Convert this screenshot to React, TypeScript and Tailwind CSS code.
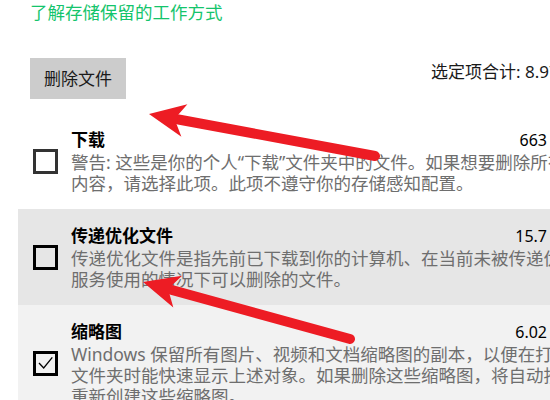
type Pt = [number, number];

// red callout arrow drawn over the screenshot
function Arrow({ tail, tip }: { tail: Pt; tip: Pt }) {
  const dx = tip[0] - tail[0];
  const dy = tip[1] - tail[1];
  const len = Math.hypot(dx, dy);
  const ux = dx / len;
  const uy = dy / len;
  const px = -uy;
  const py = ux;
  const at = (back: number, side: number) =>
    `${tip[0] - ux * back + px * side},${tip[1] - uy * back + py * side}`;
  const head = [at(0, 0), at(36, 16.5), at(29, 5), at(29, -5), at(36, -16.5)].join(" ");
  const sx = tip[0] - ux * 30;
  const sy = tip[1] - uy * 30;
  return (
    <g fill="#ed1c24" stroke="#ed1c24">
      <line x1={sx} y1={sy} x2={tail[0]} y2={tail[1]} strokeWidth={10} strokeLinecap="round" />
      <polygon points={head} strokeWidth={0} />
    </g>
  );
}

type Item = {
  title: string;
  size: string;
  lines: string[];
  bg: string;
  box: string;
  checked?: boolean;
};

const items: Item[] = [
  {
    title: "下载",
    size: "663 MB",
    lines: [
      "警告: 这些是你的个人“下载”文件夹中的文件。如果想要删除所有",
      "内容，请选择此项。此项不遵守你的存储感知配置。",
    ],
    bg: "bg-white",
    box: "border-[#333333]",
  },
  {
    title: "传递优化文件",
    size: "15.7 MB",
    lines: [
      "传递优化文件是指先前已下载到你的计算机、在当前未被传递优化",
      "服务使用的情况下可以删除的文件。",
    ],
    bg: "bg-[#e6e6e6]",
    box: "border-black",
  },
  {
    title: "缩略图",
    size: "6.02 MB",
    lines: [
      "Windows 保留所有图片、视频和文档缩略图的副本，以便在打开",
      "文件夹时能快速显示上述对象。如果删除这些缩略图，将自动按需",
      "重新创建这些缩略图。",
    ],
    bg: "bg-[#f2f2f2]",
    box: "border-black",
    checked: true,
  },
];

function Row({ item }: { item: Item }) {
  return (
    <div className={`flex items-center pl-[15px] py-[15px] ${item.bg}`}>
      <div
        className={`relative w-[25px] h-[25px] shrink-0 border-[3px] ${item.box} mr-[13px]`}
      >
        {item.checked && (
          <svg className="absolute -left-[3px] -top-[3px]" width="25" height="25" viewBox="0 0 25 25">
            <path d="M6 12 L10.7 17 L19.3 6.3" fill="none" stroke="#000" strokeWidth="1.3" />
          </svg>
        )}
      </div>
      <div className="w-[476px]">
        <div className="flex justify-between items-center h-[24px]">
          <span className="text-[17px] font-bold text-black leading-[24px]">{item.title}</span>
          <span className="text-[16px] text-black leading-[24px] whitespace-nowrap">
            {item.size.split(" ")[0]}
          </span>
        </div>
        {item.lines.map((l) => (
          <div key={l} className="text-[17.5px] leading-[21px] text-[#6e6e6e] whitespace-nowrap">
            {l}
          </div>
        ))}
      </div>
    </div>
  );
}

export default function App() {
  return (
    <div className="relative w-[550px] h-[400px] overflow-hidden bg-white font-['Noto_Sans','Noto_Sans_CJK_SC',sans-serif]">
      <div className="pl-[30px] h-[24px] text-[17.5px] leading-[24px] text-[#14c46c]">
        了解存储保留的工作方式
      </div>
      <div className="mt-[34px] pl-[30px] flex items-start">
        <button className="w-[96px] h-[41px] shrink-0 bg-[#cccccc] text-[17px] text-[#1a1a1a]">
          删除文件
        </button>
        <div className="ml-[305px] mt-[2px] shrink-0 whitespace-nowrap text-[17px] leading-[24px] text-[#1a1a1a]">
          选定项合计: 8.97 GB
        </div>
      </div>
      <div className="mt-[14px] ml-[18px] w-[700px]">
        {items.map((it) => (
          <Row key={it.title} item={it} />
        ))}
      </div>
      <svg className="absolute inset-0 pointer-events-none" width="550" height="400" viewBox="0 0 550 400">
        <Arrow tail={[375, 156]} tip={[149, 114]} />
        <Arrow tail={[350, 339]} tip={[143, 282]} />
      </svg>
    </div>
  );
}
